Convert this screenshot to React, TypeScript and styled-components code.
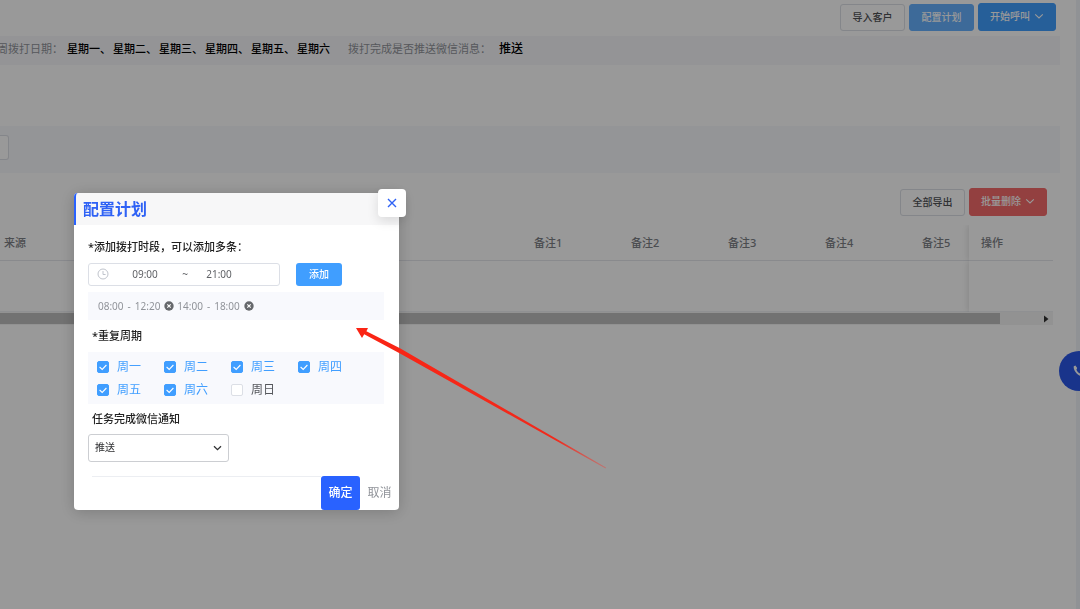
import React, { useState } from "react";
import styled, { createGlobalStyle, css } from "styled-components";

const GlobalStyle = createGlobalStyle`
  *, *::before, *::after { box-sizing: border-box; }
  html, body, #root { min-height: 100vh; }
  body {
    margin: 0;
    overflow: hidden;
    background: #f1f3f8;
    color: #303133;
    font-family: "Noto Sans", "Noto Sans CJK SC", sans-serif;
    font-size: 11px;
    line-height: 16px;
  }
  button, input, select { font-family: inherit; margin: 0; }
`;

/* ---------- page ---------- */

const Page = styled.main`
  min-height: 100vh;
  margin-right: 4px;
  padding: 3px 16px 0 0;
  background: #fff;
`;

const Toolbar = styled.div<{ $inset?: number }>`
  display: flex;
  justify-content: flex-end;
  align-items: flex-end;
  gap: 4px;
  padding-right: ${(p) => p.$inset ?? 4}px;
`;

type Tone = "plain" | "soft" | "primary" | "danger";

const tones = {
  plain: css`
    height: 27px;
    background: #fff;
    border: 1px solid #dcdfe6;
    color: #505256;
  `,
  soft: css`
    height: 27px;
    background: #66b1ff;
    border: 1px solid #66b1ff;
    color: #fff;
  `,
  primary: css`
    height: 28px;
    background: #409eff;
    border: 1px solid #409eff;
    color: #fff;
  `,
  danger: css`
    height: 28px;
    background: #f56c6c;
    border: 1px solid #f56c6c;
    color: #fff;
  `,
};

const ToolButton = styled.button<{ $tone: Tone }>`
  display: flex;
  align-items: center;
  justify-content: center;
  gap: 4px;
  min-width: 65px;
  padding: 0 11px 2px;
  border-radius: 3px;
  font-size: 10px;
  font-weight: 500;
  line-height: 16px;
  white-space: nowrap;
  ${(p) => tones[p.$tone]}
`;

const InfoBar = styled.section`
  display: flex;
  align-items: center;
  height: 29px;
  margin-top: 5px;
  margin-left: -3px;
  padding-bottom: 4px;
  background: #f7f7fb;
  white-space: nowrap;
`;

const InfoLabel = styled.span`
  color: #909399;
`;

const DayList = styled.span`
  display: flex;
  gap: 2px;
  margin: 0 18px 0 4px;
  color: #000;
  font-weight: 500;
`;

const InfoValue = styled.span`
  margin-left: 8px;
  color: #000;
  font-size: 12px;
  font-weight: 500;
`;

const FilterBar = styled.section`
  height: 47px;
  margin: 61px 0 15px;
  padding-top: 9px;
  background: #f7f9fc;
`;

const FilterInput = styled.input`
  display: block;
  width: 9px;
  height: 25px;
  padding: 0;
  border: 1px solid #dcdfe6;
  border-left: 0;
  border-radius: 0 3px 3px 0;
  background: #fff;
`;

const TableArea = styled.section`
  margin-top: 9px;
  margin-right: 7px;
`;

const DataTable = styled.table`
  width: 100%;
  table-layout: fixed;
  border-collapse: separate;
  border-spacing: 0;
`;

const pinnedShadow = css`
  box-shadow: -1px 0 6px rgba(0, 0, 0, 0.12);
  clip-path: inset(0 0 0 -8px);
`;

const HeadCell = styled.th<{ $width?: number; $indent: number; $pinned?: boolean }>`
  width: ${(p) => (p.$width ? `${p.$width}px` : "auto")};
  height: 36px;
  padding: 0 0 0 ${(p) => p.$indent}px;
  border-bottom: 1px solid #e4e6ec;
  color: #7d8086;
  font-weight: 500;
  text-align: left;
  ${(p) => p.$pinned && pinnedShadow}
`;

const BodyCell = styled.td<{ $pinned?: boolean }>`
  height: 51px;
  padding: 0;
  border-bottom: 1px solid #eef0f4;
  ${(p) => p.$pinned && pinnedShadow}
`;

const ScrollTrack = styled.div`
  display: flex;
  align-items: center;
  gap: 44px;
  height: 13px;
  padding-right: 4px;
  background: #f4f4f4;
`;

const ScrollThumb = styled.div`
  flex: 1;
  height: 11px;
  background: #bfbfbf;
`;

const CallButton = styled.button`
  position: fixed;
  top: 351px;
  right: -19px;
  display: flex;
  align-items: center;
  justify-content: center;
  width: 40px;
  height: 40px;
  padding: 0;
  border: 0;
  border-radius: 50%;
  background: #2a57e8;
`;

const Scrim = styled.div`
  position: fixed;
  inset: 0;
  background: rgba(0, 0, 0, 0.4);
`;

/* ---------- dialog ---------- */

const Dialog = styled.div`
  position: fixed;
  top: 193px;
  left: 74px;
  width: 325px;
  border-radius: 4px;
  background: #fff;
  box-shadow: 0 2px 16px rgba(0, 0, 0, 0.2);
`;

const DialogHeader = styled.header`
  height: 32px;
  padding-left: 7px;
  border-left: 2px solid #2962ff;
  border-radius: 4px 4px 0 0;
  background: #f7f7f8;
`;

const DialogTitle = styled.h2`
  margin: 0;
  color: #2f62f5;
  font-size: 16px;
  font-weight: 700;
  line-height: 32px;
`;

const CloseButton = styled.button`
  position: absolute;
  top: -4px;
  right: -7px;
  display: flex;
  align-items: center;
  justify-content: center;
  width: 28px;
  height: 28px;
  padding: 0 0 1px;
  border: 0;
  border-radius: 4px;
  background: #fff;
  box-shadow: 0 4px 12px rgba(0, 0, 0, 0.12);
`;

const DialogBody = styled.div`
  padding: 14px 15px 0 14px;
`;

const FieldLabel = styled.label<{ $indent?: number }>`
  display: block;
  padding-left: ${(p) => p.$indent ?? 4}px;
  color: #222;
  font-weight: 500;
  line-height: 16px;
`;

const TimeRow = styled.div`
  display: flex;
  gap: 16px;
  margin-top: 8px;
`;

const TimeRange = styled.div`
  display: flex;
  align-items: center;
  width: 192px;
  height: 23px;
  padding: 0 0 2px 8px;
  border: 1px solid #dcdfe6;
  border-radius: 3px;
  color: #606266;
`;

const TimeInput = styled.input`
  width: 62px;
  padding: 0;
  border: 0;
  outline: 0;
  background: transparent;
  color: #606266;
  font-size: 10px;
  line-height: 16px;
  text-align: center;
`;

const ClockIcon = styled.svg`
  margin-right: 5px;
`;

const Tilde = styled.span`
  width: 12px;
  font-size: 10px;
  text-align: right;
`;

const AddButton = styled.button`
  width: 46px;
  height: 23px;
  padding: 0 0 2px;
  border: 0;
  border-radius: 3px;
  background: #409eff;
  color: #fff;
  font-size: 10px;
  font-weight: 500;
  line-height: 16px;
`;

const Chips = styled.div`
  display: flex;
  align-items: center;
  gap: 3px;
  height: 28px;
  margin: 6px 0 8px;
  padding-left: 10px;
  background: #f8f9fd;
`;

const Chip = styled.span`
  display: flex;
  align-items: center;
  gap: 4px;
  color: #909399;
  font-size: 10px;
`;

const ChipRemove = styled.button`
  display: flex;
  padding: 0;
  border: 0;
  background: transparent;
`;

const WeekGrid = styled.div`
  display: grid;
  grid-template-columns: repeat(4, 67px);
  grid-auto-rows: 23px;
  margin: 8px 0 7px;
  padding: 3px 0 3px 9px;
  background: #f8f9fd;
`;

const DayLabel = styled.label<{ $on: boolean }>`
  position: relative;
  display: flex;
  align-items: center;
  gap: 8px;
  color: ${(p) => (p.$on ? "#409eff" : "#55575c")};
  font-size: 12px;
`;

const DayBox = styled.input`
  appearance: none;
  width: 12px;
  height: 12px;
  border: 1px solid #dcdfe6;
  border-radius: 2px;
  background: #fff;
  &:checked {
    border-color: #409eff;
    background: #409eff;
  }
`;

const Tick = styled.svg`
  position: absolute;
  left: 0;
  pointer-events: none;
`;

const SelectWrap = styled.div`
  position: relative;
  display: flex;
  align-items: center;
  width: 141px;
  margin-top: 7px;
`;

const Select = styled.select`
  appearance: none;
  width: 100%;
  height: 28px;
  padding: 0 24px 2px 6px;
  border: 1px solid #ccced2;
  border-radius: 3px;
  background: #fff;
  color: #303133;
  font-size: 10px;
  line-height: 16px;
`;

const SelectArrow = styled.svg`
  position: absolute;
  right: 7px;
  pointer-events: none;
`;

const DialogFooter = styled.footer`
  display: flex;
  justify-content: flex-end;
  margin: 14px 0 0 18px;
`;

const FooterRule = styled.div`
  flex: 1;
  border-top: 1px solid #eceef2;
`;

const ConfirmButton = styled.button`
  width: 39px;
  height: 34px;
  padding: 0 0 2px;
  border: 0;
  border-radius: 3px;
  background: #2962ff;
  color: #fff;
  font-size: 12px;
  font-weight: 500;
`;

const CancelButton = styled.button`
  width: 39px;
  padding: 0 0 2px;
  border: 0;
  background: transparent;
  color: #909399;
  font-size: 12px;
`;

const PointerArrow = styled.svg`
  position: fixed;
  top: 320px;
  left: 350px;
  pointer-events: none;
`;

/* ---------- small drawings ---------- */

const Chevron = () => (
  <svg width="10" height="8" viewBox="0 0 10 8" fill="none" stroke="#fff" strokeWidth="1.1" aria-hidden="true">
    <path d="M1.2 2.4 5 6 8.8 2.4" />
  </svg>
);

const RemoveIcon = () => (
  <svg width="10" height="10" viewBox="0 0 10 10" aria-hidden="true">
    <circle cx="5" cy="5" r="4.7" fill="#66686c" />
    <path d="M3.3 3.3 6.7 6.7M6.7 3.3 3.3 6.7" stroke="#fff" strokeWidth="1.1" />
  </svg>
);

const infoDays = ["星期一、", "星期二、", "星期三、", "星期四、", "星期五、", "星期六"];
const remarks = ["备注1", "备注2", "备注3", "备注4", "备注5"];
const week = ["周一", "周二", "周三", "周四", "周五", "周六", "周日"];
const slots = [
  ["08:00", "12:20"],
  ["14:00", "18:00"],
];

export default function App() {
  const [days, setDays] = useState<string[]>(week.slice(0, 6));
  const toggle = (day: string) =>
    setDays((cur) => (cur.includes(day) ? cur.filter((d) => d !== day) : [...cur, day]));

  return (
    <>
      <GlobalStyle />
      <Page>
        <Toolbar>
          <ToolButton $tone="plain">导入客户</ToolButton>
          <ToolButton $tone="soft">配置计划</ToolButton>
          <ToolButton $tone="primary">
            开始呼叫
            <Chevron />
          </ToolButton>
        </Toolbar>

        <InfoBar>
          <InfoLabel>周拨打日期：</InfoLabel>
          <DayList>
            {infoDays.map((d) => (
              <span key={d}>{d}</span>
            ))}
          </DayList>
          <InfoLabel>拨打完成是否推送微信消息：</InfoLabel>
          <InfoValue>推送</InfoValue>
        </InfoBar>

        <FilterBar>
          <FilterInput aria-label="筛选" />
        </FilterBar>

        <Toolbar $inset={13}>
          <ToolButton $tone="plain">全部导出</ToolButton>
          <ToolButton $tone="danger">
            批量删除
            <Chevron />
          </ToolButton>
        </Toolbar>

        <TableArea>
          <DataTable>
            <thead>
              <tr>
                <HeadCell $indent={4}>来源</HeadCell>
                {remarks.map((r) => (
                  <HeadCell key={r} $width={97} $indent={50}>
                    {r}
                  </HeadCell>
                ))}
                <HeadCell $width={84} $indent={12} $pinned>
                  操作
                </HeadCell>
              </tr>
            </thead>
            <tbody>
              <tr>
                <BodyCell colSpan={6} />
                <BodyCell $pinned />
              </tr>
            </tbody>
          </DataTable>
          <ScrollTrack>
            <ScrollThumb />
            <svg width="5" height="8" viewBox="0 0 5 8" aria-hidden="true">
              <path d="M0 0.5 4.5 4 0 7.5z" fill="#333" />
            </svg>
          </ScrollTrack>
        </TableArea>

        <CallButton aria-label="拨打电话">
          <svg width="12" height="12" viewBox="0 0 12 12" fill="#fff" aria-hidden="true">
            <path d="M2.4 0.5 0.8 1.3C-0.2 5.6 5.4 12 10.4 11.3L11.5 9.6 9 7.7 7.4 8.7C5.6 8 4.2 6.6 3.4 4.7L4.2 3.1z" />
          </svg>
        </CallButton>
      </Page>

      <Scrim />

      <Dialog role="dialog" aria-modal="true" aria-labelledby="plan-title">
        <DialogHeader>
          <DialogTitle id="plan-title">配置计划</DialogTitle>
        </DialogHeader>
        <CloseButton aria-label="关闭">
          <svg width="10" height="10" viewBox="0 0 10 10" stroke="#2f62f5" strokeWidth="1.4" aria-hidden="true">
            <path d="M1 1 9 9M9 1 1 9" />
          </svg>
        </CloseButton>

        <DialogBody>
          <FieldLabel htmlFor="start-time" $indent={0}>
            *添加拨打时段，可以添加多条：
          </FieldLabel>
          <TimeRow>
            <TimeRange>
              <ClockIcon width="12" height="12" viewBox="0 0 12 12" fill="none" stroke="#c0c4cc" aria-hidden="true">
                <circle cx="6" cy="6" r="5" />
                <path d="M6 3V6.5H8.6" />
              </ClockIcon>
              <TimeInput id="start-time" defaultValue="09:00" />
              <Tilde>~</Tilde>
              <TimeInput aria-label="结束时间" defaultValue="21:00" />
            </TimeRange>
            <AddButton>添加</AddButton>
          </TimeRow>

          <Chips>
            {slots.map(([from, to]) => (
              <Chip key={from}>
                <span>{from}</span>
                <span>-</span>
                <span>{to}</span>
                <ChipRemove aria-label="移除">
                  <RemoveIcon />
                </ChipRemove>
              </Chip>
            ))}
          </Chips>

          <FieldLabel as="div" id="week-label">
            *重复周期
          </FieldLabel>
          <WeekGrid role="group" aria-labelledby="week-label">
            {week.map((d) => {
              const on = days.includes(d);
              return (
                <DayLabel key={d} $on={on}>
                  <DayBox type="checkbox" checked={on} onChange={() => toggle(d)} />
                  {on && (
                    <Tick width="12" height="12" viewBox="0 0 12 12" fill="none" stroke="#fff" strokeWidth="1.1" aria-hidden="true">
                      <path d="M2.6 6 5.2 8.4 9.4 4" />
                    </Tick>
                  )}
                  {d}
                </DayLabel>
              );
            })}
          </WeekGrid>

          <FieldLabel htmlFor="notify">任务完成微信通知</FieldLabel>
          <SelectWrap>
            <Select id="notify" defaultValue="推送">
              <option>推送</option>
              <option>不推送</option>
            </Select>
            <SelectArrow width="9" height="8" viewBox="0 0 9 8" fill="none" stroke="#303133" strokeWidth="1.3" aria-hidden="true">
              <path d="M1 2.2 4.5 5.7 8 2.2" />
            </SelectArrow>
          </SelectWrap>
        </DialogBody>

        <DialogFooter>
          <FooterRule />
          <ConfirmButton>确定</ConfirmButton>
          <CancelButton>取消</CancelButton>
        </DialogFooter>
      </Dialog>

      <PointerArrow width="260" height="152" viewBox="350 320 260 152" aria-hidden="true">
        <defs>
          <linearGradient id="fade" gradientUnits="userSpaceOnUse" x1="356" y1="328" x2="605" y2="468">
            <stop offset="0" stopColor="#fb2414" />
            <stop offset="0.8" stopColor="#f02a1c" />
            <stop offset="1" stopColor="#e05048" stopOpacity="0.5" />
          </linearGradient>
        </defs>
        <path d="M356 328 368 328 366.4 331.2 400 348.2 606 467.6 605.6 468.4 400 353.4 364.2 334.2 362 338z" fill="url(#fade)" />
      </PointerArrow>
    </>
  );
}
